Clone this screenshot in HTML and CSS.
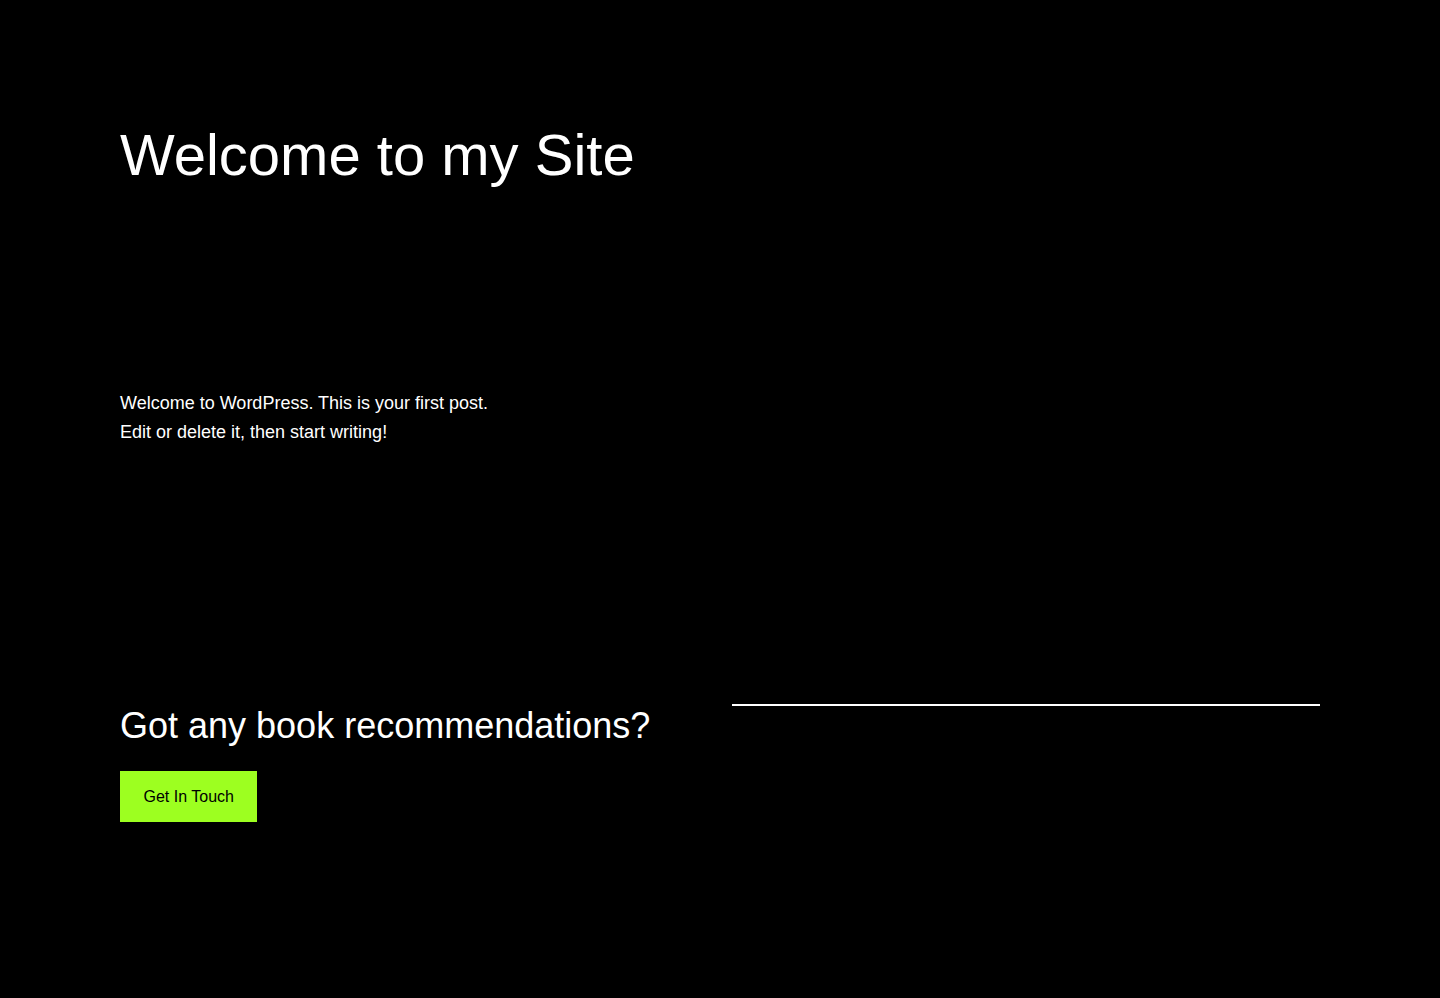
FILE: index.html
```html
<!DOCTYPE html>
<html lang="en">
<head>
<meta charset="utf-8">
<title>Welcome to my Site</title>
<link rel="stylesheet" href="styles.css">
</head>
<body>
<div class="page">
  <header class="site-header">
    <h1 class="site-title">Welcome to my Site</h1>
  </header>
  <main class="content">
    <p class="post-text">Welcome to WordPress. This is your first post.<br>Edit or delete it, then start writing!</p>
  </main>
  <footer class="footer">
    <div class="footer-col">
      <h2 class="footer-heading">Got any book recommendations?</h2>
      <a class="btn" href="#">Get In Touch</a>
    </div>
    <div class="footer-col footer-right">
      <hr class="rule">
    </div>
  </footer>
</div>
</body>
</html>
```
FILE: styles.css
```css
html, body {
  margin: 0;
  padding: 0;
  background: #000;
  color: #fff;
  font-family: "Liberation Sans", Arial, sans-serif;
}
.page {
  width: 1200px;
  margin: 0 auto;
  padding-top: 120px;
}
.site-title {
  margin: 0;
  font-size: 58px;
  font-weight: 400;
  line-height: 1.2;
}
.content {
  padding-top: 199.4px;
}
.post-text {
  margin: 0;
  font-size: 18px;
  line-height: 29px;
  max-width: 588px;
}
.footer {
  display: grid;
  grid-template-columns: 588px 588px;
  column-gap: 24px;
  padding-top: 257px;
}
.footer-heading {
  margin: 0 0 24px;
  font-size: 36px;
  font-weight: 400;
  line-height: 1.2;
}
.btn {
  display: inline-block;
  background: #9dff20;
  color: #000;
  text-decoration: none;
  font-size: 16px;
  line-height: 19px;
  padding: 16px 23.5px;
}
.rule {
  margin: 0;
  border: 0;
  height: 2px;
  background: #fff;
}
```
